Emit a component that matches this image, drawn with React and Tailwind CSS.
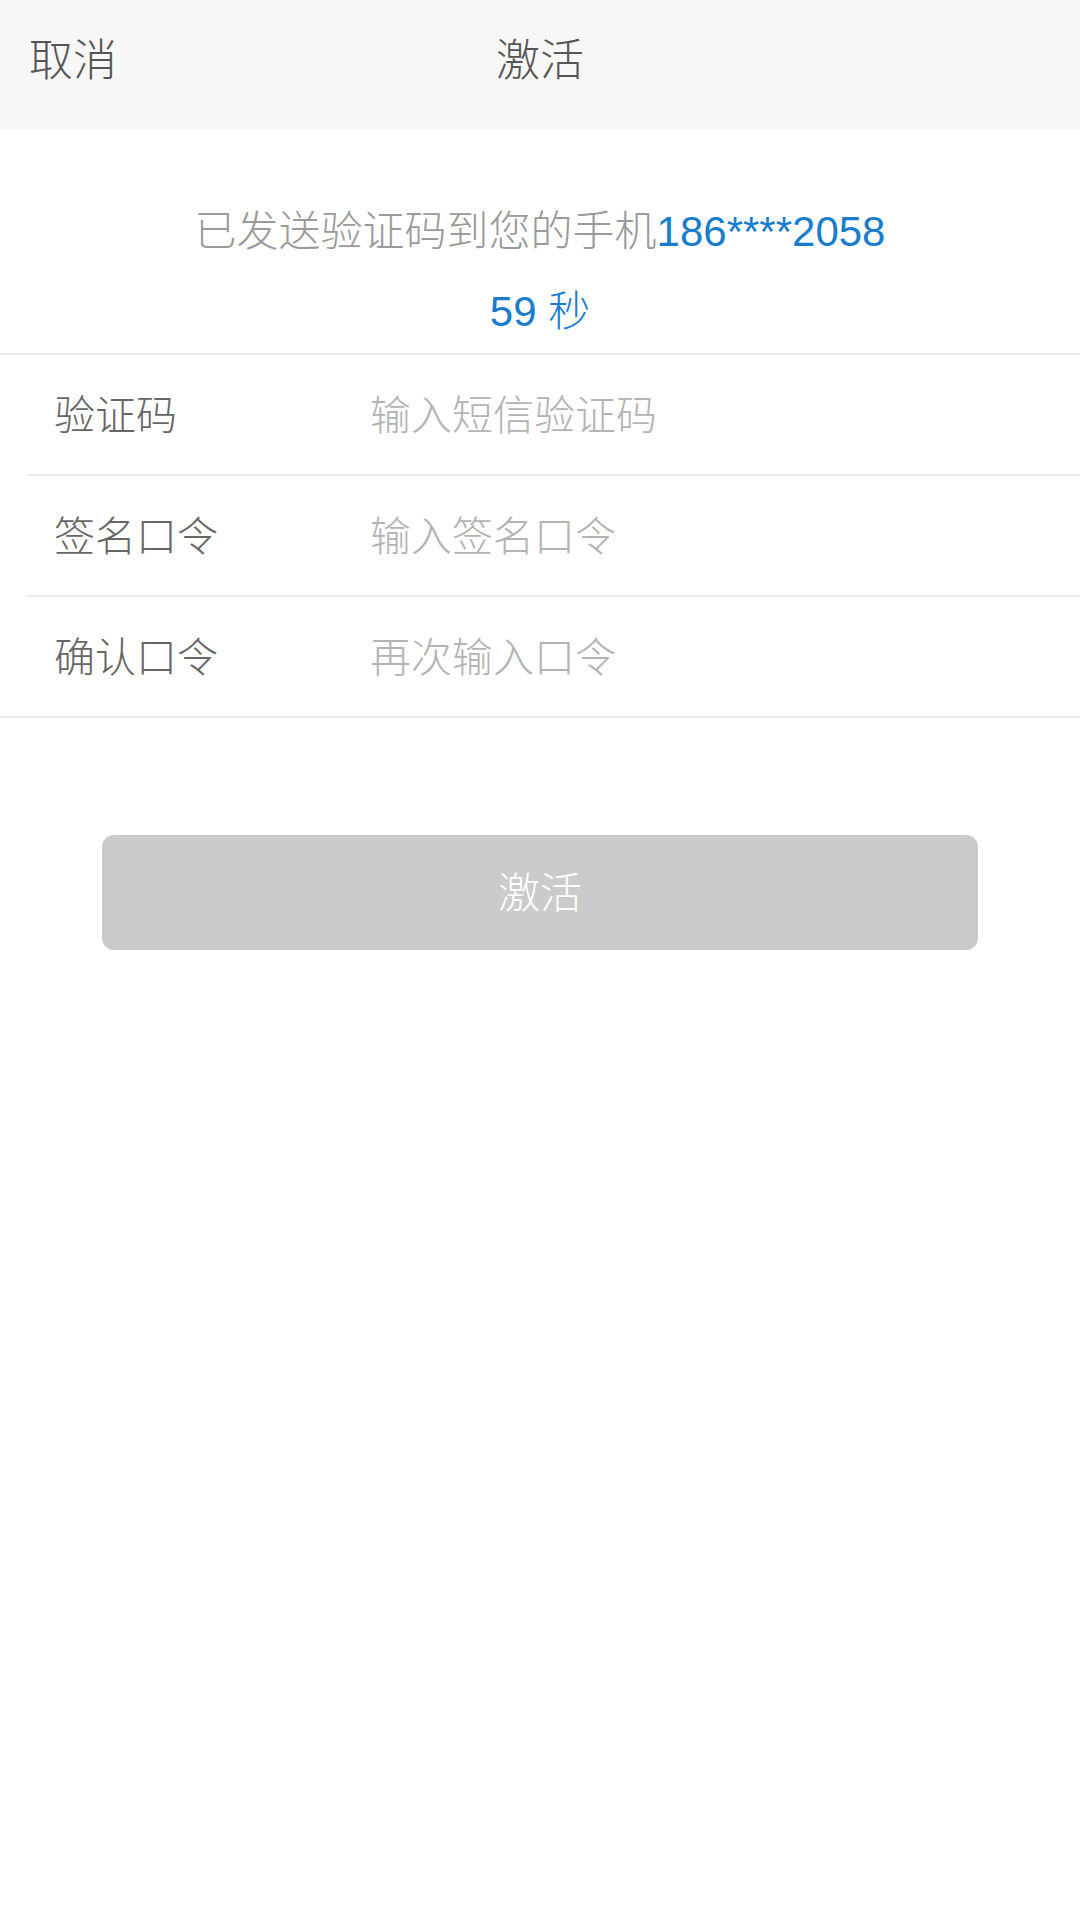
import React, { useState } from "react";

const font = { fontFamily: '"Liberation Sans", "Noto Sans CJK SC", sans-serif' };

const fields = [
    { label: "验证码", placeholder: "输入短信验证码", type: "text" },
    { label: "签名口令", placeholder: "输入签名口令", type: "password" },
    { label: "确认口令", placeholder: "再次输入口令", type: "password" },
];

const App = () => {
    const [values, setValues] = useState(["", "", ""]);

    const handleChange = (index, value) => {
        const next = [...values];
        next[index] = value;
        setValues(next);
    };

    const ready = values.every((v) => v.length > 0);

    return (
        <div className="min-h-[1920px] w-[1080px] bg-white font-light" style={font}>
            {/* top bar */}
            <div className="relative flex h-[129px] items-center justify-center bg-[#f7f7f7] pb-[7px]">
                <button className="absolute left-[29px] text-[44px] leading-none text-[#555555]">取消</button>
                <h1 className="text-[44px] leading-none text-[#555555]">激活</h1>
            </div>

            <div className="flex flex-col items-center gap-[20px] pt-[73px] pb-[11px] text-[42px] leading-[60px]">
                <p className="text-[#9a9a9a]">
                    已发送验证码到您的手机<span className="text-[#1a7dcc]">186****2058</span>
                </p>
                <p className="text-[#1a7dcc]">59 秒</p>
            </div>

            <div className="border-t-2 border-b-2 border-[#ececec]">
                {fields.map((field, index) => (
                    <div
                        key={field.label}
                        className={index < fields.length - 1 ? "ml-[26px] border-b-2 border-[#ececec]" : "ml-[26px]"}
                    >
                        <div className="flex h-[119px] items-center pt-[4px]">
                            <label className="w-[344px] pl-[28px] text-[41px] text-[#666666]">{field.label}</label>
                            <input
                                type={field.type}
                                value={values[index]}
                                onChange={(e) => handleChange(index, e.target.value)}
                                placeholder={field.placeholder}
                                className="flex-1 bg-transparent text-[41px] text-[#333333] outline-none placeholder:text-[#b3b3b3]"
                            />
                        </div>
                    </div>
                ))}
            </div>

            <div className="mx-[102px] mt-[117px]">
                <button
                    disabled={!ready}
                    className={
                        ready
                            ? "flex h-[115px] w-full items-center justify-center rounded-[12px] bg-[#1a7dcc] pt-[2px] text-[42px] text-white"
                            : "flex h-[115px] w-full items-center justify-center rounded-[12px] bg-[#cbcbcb] pt-[2px] text-[42px] text-white"
                    }
                >
                    激活
                </button>
            </div>
        </div>
    );
};

export default App;
